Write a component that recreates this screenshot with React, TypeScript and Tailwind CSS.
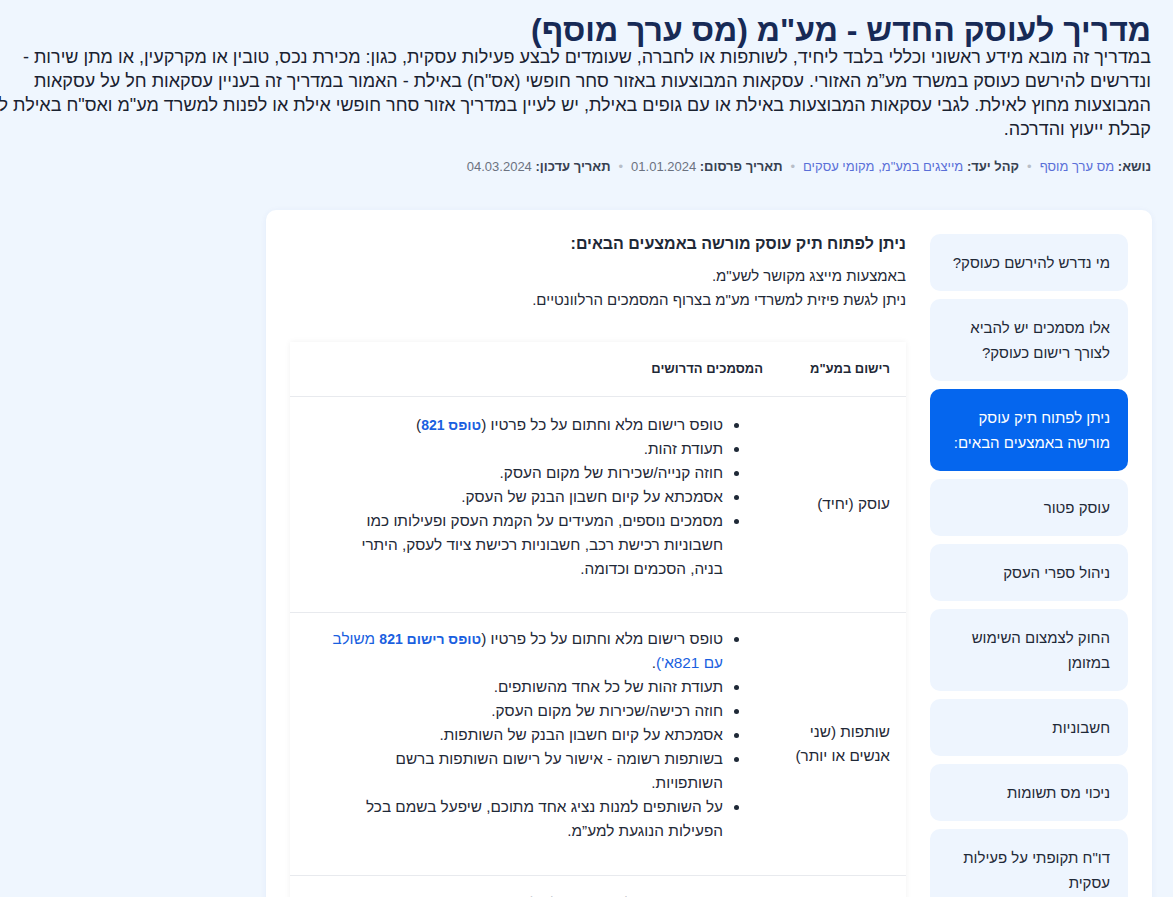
import React from 'react';

const SIDEBAR_ITEMS = [
  'מי נדרש להירשם כעוסק?',
  'אלו מסמכים יש להביא לצורך רישום כעוסק?',
  'ניתן לפתוח תיק עוסק מורשה באמצעים הבאים:',
  'עוסק פטור',
  'ניהול ספרי העסק',
  'החוק לצמצום השימוש במזומן',
  'חשבוניות',
  'ניכוי מס תשומות',
  'דו"ח תקופתי על פעילות עסקית',
];

const ACTIVE = 2;

function Sep() {
  return <span className="mx-2 text-[#b8bec8]">•</span>;
}

export default function App() {
  return (
    <div
      dir="rtl"
      className="min-h-screen overflow-hidden bg-[#eff6fe] font-['Liberation_Sans','DejaVu_Sans',sans-serif] text-[#1f2937]"
    >
      {/* Header */}
      <header className="pr-[22px] pt-[12px]">
        <div className="w-[1180px]">
          <h1 className="text-[32px] font-bold leading-[36px] text-[#172a56]">
            מדריך לעוסק החדש - מע"מ (מס ערך מוסף)
          </h1>
          <p className="mt-[-3px] text-[18px] leading-[24px] text-[#1a2230]">
            במדריך זה מובא מידע ראשוני וכללי בלבד ליחיד, לשותפות או לחברה, שעומדים לבצע פעילות עסקית, כגון: מכירת נכס, טובין או מקרקעין, או מתן שירות - ונדרשים להירשם כעוסק במשרד מע”מ האזורי. עסקאות המבוצעות באזור סחר חופשי (אס"ח) באילת - האמור במדריך זה בעניין עסקאות חל על עסקאות המבוצעות מחוץ לאילת. לגבי עסקאות המבוצעות באילת או עם גופים באילת, יש לעיין במדריך אזור סחר חופשי אילת או לפנות למשרד מע"מ ואס"ח באילת לשם קבלת ייעוץ והדרכה.
          </p>
        </div>
        <div className="mt-[16px] text-[13px] leading-5">
          <span className="font-bold text-[#374151]">נושא: </span>
          <span className="text-[#5a6fd8]">מס ערך מוסף</span>
          <Sep />
          <span className="font-bold text-[#374151]">קהל יעד: </span>
          <span className="text-[#5a6fd8]">מייצגים במע"מ, מקומי עסקים</span>
          <Sep />
          <span className="font-bold text-[#374151]">תאריך פרסום: </span>
          <span className="text-[#6b7280]">01.01.2024</span>
          <Sep />
          <span className="font-bold text-[#374151]">תאריך עדכון: </span>
          <span className="text-[#6b7280]">04.03.2024</span>
        </div>
      </header>

      {/* Main card */}
      <div className="mt-[33px] flex pr-[21px]">
        <div className="flex w-[886px] gap-6 rounded-[10px] bg-white p-6 shadow-[0_1px_6px_rgba(30,64,175,0.06)]">
          {/* Sidebar */}
          <nav className="flex w-[198px] shrink-0 flex-col gap-2">
            {SIDEBAR_ITEMS.map((item, i) => (
              <div
                key={i}
                className={
                  i === ACTIVE
                    ? 'rounded-[10px] bg-[#0566ee] px-[18px] py-4 text-[15px] leading-[25px] text-white'
                    : 'rounded-[10px] bg-[#eef5fe] px-[18px] py-4 text-[15px] leading-[25px] text-[#1f2937]'
                }
              >
                {item}
              </div>
            ))}
          </nav>

          {/* Content */}
          <section className="min-w-0 flex-1">
            <h2 className="text-[16px] font-bold leading-5 text-[#1f2937]">
              ניתן לפתוח תיק עוסק מורשה באמצעים הבאים:
            </h2>
            <div className="mt-[10px] text-[15px] leading-6 text-[#1f2937]">
              <p>באמצעות מייצג מקושר לשע"מ.</p>
              <p>ניתן לגשת פיזית למשרדי מע"מ בצרוף המסמכים הרלוונטיים.</p>
            </div>

            <table className="mt-[30px] w-full border-collapse bg-white text-right shadow-[0_0_6px_rgba(0,0,0,0.06)]">
              <thead>
                <tr className="h-[54px] border-b border-[#e8eaee]">
                  <th className="w-[127px] px-4 text-[13px] font-bold text-[#1f2937]">רישום במע"מ</th>
                  <th className="pl-[35px] pr-4 text-[13px] font-bold text-[#1f2937]">המסמכים הדרושים</th>
                </tr>
              </thead>
              <tbody className="text-[15.35px] leading-6 text-[#1f2937]">
                <tr className="border-b border-[#e8eaee]">
                  <td className="px-4 align-middle">עוסק (יחיד)</td>
                  <td className="pb-[31px] pl-[35px] pr-4 pt-4 align-top">
                    <ul className="list-disc pr-10">
                      <li>
                        טופס רישום מלא וחתום על כל פרטיו (
                        <span className="text-[14px] font-bold text-[#1a5fe0]">טופס 821</span>)
                      </li>
                      <li>תעודת זהות.</li>
                      <li>חוזה קנייה/שכירות של מקום העסק.</li>
                      <li>אסמכתא על קיום חשבון הבנק של העסק.</li>
                      <li>
                        מסמכים נוספים, המעידים על הקמת העסק ופעילותו כמו חשבוניות רכישת רכב, חשבוניות רכישת ציוד לעסק, היתרי בניה, הסכמים וכדומה.
                      </li>
                    </ul>
                  </td>
                </tr>
                <tr className="border-b border-[#e8eaee]">
                  <td className="px-4 align-middle">שותפות (שני אנשים או יותר)</td>
                  <td className="pb-8 pl-[35px] pr-4 pt-[14px] align-top">
                    <ul className="list-disc pr-10">
                      <li>
                        טופס רישום מלא וחתום על כל פרטיו (
                        <span className="text-[#1a5fe0]">
                          <span className="text-[14px] font-bold">טופס רישום 821</span> משולב עם 821א')
                        </span>
                        .
                      </li>
                      <li>תעודת זהות של כל אחד מהשותפים.</li>
                      <li>חוזה רכישה/שכירות של מקום העסק.</li>
                      <li>אסמכתא על קיום חשבון הבנק של השותפות.</li>
                      <li>בשותפות רשומה - אישור על רישום השותפות ברשם השותפויות.</li>
                      <li>על השותפים למנות נציג אחד מתוכם, שיפעל בשמם בכל הפעילות הנוגעת למע”מ.</li>
                    </ul>
                  </td>
                </tr>
                <tr>
                  <td className="px-4 py-4 align-middle">חברה</td>
                  <td className="py-4 pl-[35px] pr-4 align-top">
                    <ul className="list-disc pr-10">
                      <li>
                        טופס רישום מלא וחתום על כל פרטיו (
                        <span className="text-[14px] font-bold text-[#1a5fe0]">טופס 821</span>)
                      </li>
                    </ul>
                  </td>
                </tr>
              </tbody>
            </table>
          </section>
        </div>
      </div>
    </div>
  );
}
